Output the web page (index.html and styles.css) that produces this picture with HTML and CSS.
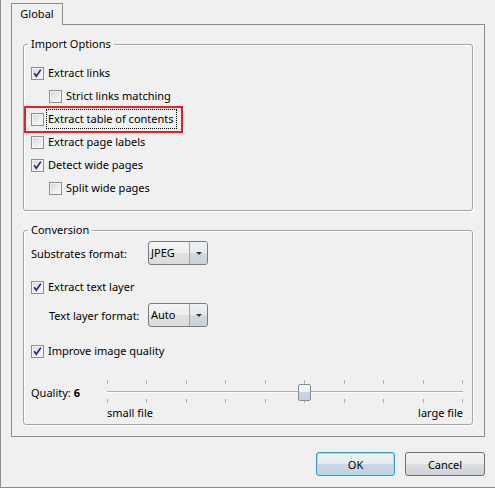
FILE: index.html
```html
<!DOCTYPE html>
<html lang="en">
<head>
    <meta charset="UTF-8">
    <title>Options</title>
    <link rel="stylesheet" href="styles.css">
</head>
<body>
    <div class="window">
        <div class="tabs">
            <div class="tab">Global</div>
        </div>
        <div class="pane">
            <fieldset class="group import">
                <legend>Import Options</legend>
                <div class="row">
                    <span class="check on"><svg viewBox="0 0 11 11"><path d="M2.2 5.2 L4.3 8.3 L8.8 1.6"/></svg></span>
                    <span class="text">Extract links</span>
                </div>
                <div class="row indent">
                    <span class="check"></span>
                    <span class="text">Strict links matching</span>
                </div>
                <div class="row marked">
                    <span class="check"></span>
                    <span class="text focus">Extract table of contents</span>
                </div>
                <div class="row">
                    <span class="check"></span>
                    <span class="text">Extract page labels</span>
                </div>
                <div class="row">
                    <span class="check on"><svg viewBox="0 0 11 11"><path d="M2.2 5.2 L4.3 8.3 L8.8 1.6"/></svg></span>
                    <span class="text">Detect wide pages</span>
                </div>
                <div class="row indent">
                    <span class="check"></span>
                    <span class="text">Split wide pages</span>
                </div>
            </fieldset>

            <fieldset class="group conversion">
                <legend>Conversion</legend>
                <div class="field">
                    <span class="field-label">Substrates format:</span>
                    <div class="combo">
                        <span class="combo-text">JPEG</span>
                        <span class="combo-arrow"></span>
                    </div>
                </div>
                <div class="row gap-text">
                    <span class="check on"><svg viewBox="0 0 11 11"><path d="M2.2 5.2 L4.3 8.3 L8.8 1.6"/></svg></span>
                    <span class="text">Extract text layer</span>
                </div>
                <div class="field indent gap-format">
                    <span class="field-label">Text layer format:</span>
                    <div class="combo">
                        <span class="combo-text">Auto</span>
                        <span class="combo-arrow"></span>
                    </div>
                </div>
                <div class="row gap-quality">
                    <span class="check on"><svg viewBox="0 0 11 11"><path d="M2.2 5.2 L4.3 8.3 L8.8 1.6"/></svg></span>
                    <span class="text">Improve image quality</span>
                </div>
                <div class="quality">
                    <span class="quality-label">Quality: <b>6</b></span>
                    <div class="slider">
                        <div class="ticks">
                            <i></i><i></i><i></i><i></i><i></i><i></i><i></i><i></i><i></i><i></i>
                        </div>
                        <div class="track"></div>
                        <div class="ticks bottom">
                            <i></i><i></i><i></i><i></i><i></i><i></i><i></i><i></i><i></i><i></i>
                        </div>
                        <div class="slider-labels">
                            <span>small file</span>
                            <span>large file</span>
                        </div>
                        <div class="thumb" style="left: 191px;"></div>
                    </div>
                </div>
            </fieldset>
        </div>
        <div class="buttons">
            <button class="btn default">OK</button>
            <button class="btn">Cancel</button>
        </div>
    </div>
</body>
</html>
```

FILE: styles.css
```css
html, body {
    margin: 0;
    padding: 0;
    background: #f0f0f0;
}
.window {
    width: 495px;
    height: 488px;
    box-sizing: border-box;
    border-left: 1px solid #8d8d8d;
    border-bottom: 1px solid #8d8d8d;
    background: #f0f0f0;
    font-family: "Segoe UI", "Noto Sans", sans-serif;
    font-size: 11px;
    color: #000;
}
.tabs {
    display: flex;
    padding: 3px 0 0 10px;
}
.tab {
    width: 52px;
    height: 22px;
    box-sizing: border-box;
    border: 1px solid #898c95;
    border-bottom: none;
    margin-bottom: -1px;
    background: #f0f0f0;
    line-height: 20px;
    text-align: center;
    position: relative;
    z-index: 1;
}
.pane {
    margin-left: 10px;
    width: 474px;
    height: 413px;
    box-sizing: border-box;
    border: 1px solid #898c95;
    padding: 11px 11px 0 11px;
}
.group {
    margin: 0;
    border: 1px solid #a5a5a5;
    border-radius: 3px;
    box-shadow: 1px 1px 0 #fff, inset 1px 1px 0 #fff;
    padding: 0 7px;
    min-width: 0;
}
.group legend {
    padding: 0 3px;
    margin-left: -3px;
    line-height: 16px;
}
.import {
    padding-top: 13px;
    padding-bottom: 14px;
}
.conversion {
    margin-top: 11px;
    padding-top: 3px;
    padding-bottom: 3px;
}

/* check boxes */
.row {
    display: flex;
    align-items: center;
    height: 16px;
    line-height: 16px;
}
.row + .row {
    margin-top: 7px;
}
.indent {
    padding-left: 18px;
}
.check {
    width: 13px;
    height: 13px;
    box-sizing: border-box;
    border: 1px solid #8e8f8f;
    background: linear-gradient(135deg, #d3d5d8, #f6f6f6 80%);
    box-shadow: inset 0 0 0 1px #f4f4f4;
    margin-right: 4px;
    flex: none;
    display: flex;
}
.check svg {
    width: 11px;
    height: 11px;
}
.check path {
    fill: none;
    stroke: #24248c;
    stroke-width: 1.7;
}
.focus {
    outline: 1px dotted #000;
    outline-offset: 1px;
    padding-right: 1px;
}
.marked {
    position: relative;
}
.marked::after {
    content: "";
    position: absolute;
    left: -7px;
    top: -5px;
    width: 159px;
    height: 27px;
    box-sizing: border-box;
    border: 2px solid #e5222c;
}

/* combo boxes */
.field {
    display: flex;
    align-items: center;
    height: 24px;
}
.field-label {
    width: 117px;
    flex: none;
}
.field.indent .field-label {
    width: 99px;
}
.combo {
    width: 60px;
    height: 24px;
    box-sizing: border-box;
    border: 1px solid #7a7a7a;
    border-radius: 3px;
    display: flex;
    background: linear-gradient(#f4f4f4, #ededed 50%, #e2e2e2 50%, #d9dbdd);
    overflow: hidden;
}
.combo-text {
    flex: 1;
    padding-left: 2px;
    line-height: 22px;
}
.combo-arrow {
    width: 17px;
    border-left: 1px solid #a4a4a4;
    background: linear-gradient(#eef0f2, #e6e9ec 50%, #d3d9df 50%, #c9d1d9);
    display: flex;
    align-items: center;
    justify-content: center;
}
.combo-arrow::before {
    content: "";
    border-left: 3px solid transparent;
    border-right: 3px solid transparent;
    border-top: 3px solid #333;
}
.gap-text {
    margin-top: 14px;
}
.gap-format {
    margin-top: 8px;
}
.row.gap-quality {
    margin-top: 16px;
}

/* slider */
.quality {
    display: flex;
    margin-top: 21px;
}
.quality-label {
    width: 76px;
    flex: none;
    margin-top: 5px;
    line-height: 16px;
}
.slider {
    width: 356px;
    position: relative;
}
.ticks {
    display: flex;
    justify-content: space-between;
    height: 4px;
}
.ticks i {
    width: 1px;
    background: #b4b4b4;
}
.ticks.bottom {
    margin-top: 6px;
}
.track {
    margin-top: 7px;
    height: 1px;
    background: #b0b0b0;
    border-bottom: 1px solid #fcfcfc;
}
.slider-labels {
    display: flex;
    justify-content: space-between;
    margin-top: 2px;
    line-height: 16px;
}
.thumb {
    position: absolute;
    top: 4px;
    width: 13px;
    height: 17px;
    box-sizing: border-box;
    border: 1px solid #8c8c8c;
    border-radius: 2px;
    background: linear-gradient(#f7f8f9, #eef1f4 45%, #cbd6e2 50%, #c4d0dd);
}

/* buttons */
.buttons {
    display: flex;
    justify-content: flex-end;
    gap: 10px;
    margin-top: 15px;
    padding-right: 10px;
}
.btn {
    width: 80px;
    height: 24px;
    box-sizing: border-box;
    border: 1px solid #707070;
    border-radius: 3px;
    background: linear-gradient(#f2f2f2, #ebebeb 50%, #dddfe1 50%, #cfd3d7);
    font-family: inherit;
    font-size: 11px;
    color: #000;
    padding: 0;
}
.btn.default {
    width: 79px;
    border-color: #3c9ad0;
    box-shadow: inset 0 0 0 1px #9fdcf7;
    background: linear-gradient(#eef2f5, #e6ecf1 50%, #cad8e4 50%, #c1d2e1);
}
```
